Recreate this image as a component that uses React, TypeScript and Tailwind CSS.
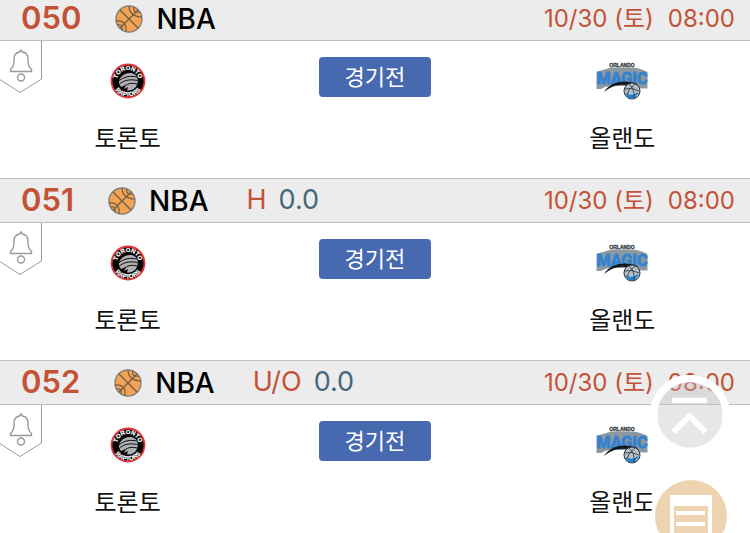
const latin = "font-['Inter','Noto_Sans_CJK_KR',sans-serif]";

type Match = { no: string; market?: string; line?: string };

const matches: Match[] = [
  { no: "050" },
  { no: "051", market: "H", line: "0.0" },
  { no: "052", market: "U/O", line: "0.0" },
];

function Basketball() {
  return (
    <svg className="size-7 shrink-0" viewBox="0 0 28 28" fill="none" aria-hidden="true">
      <circle cx="14" cy="14" r="13" fill="#f2a454" stroke="#85807a" strokeWidth="1.4" />
      <g stroke="#6b5b48" strokeWidth="1.2">
        <path d="M5 5 23 23M23 5 5 23" />
        <path d="M14 1c0 6 4 11 13 11M19 2c-1 4 1 6 6 5" />
        <path d="M1 16c7-1 11 3 10 11M2 20c4-1 6 1 5 5" />
      </g>
    </svg>
  );
}

function BellFlag() {
  return (
    <svg className="h-[53px] w-[42px]" viewBox="0 0 42 53" fill="none" stroke="#999" aria-hidden="true">
      <path d="M41.5 0V38L20 51.5L-1 38" />
      <g strokeWidth="1.4">
        <path d="M10.5 30.5H31.5V28.500C29 26.500 28 24 28 20V18C28 14 25.500 11.500 22.500 11L21 9L19.500 11C16.500 11.500 14 14 14 18V20C14 24 13 26.500 10.500 28.500Z" />
        <circle cx="21" cy="36.500" r="3.500" />
      </g>
    </svg>
  );
}

function RaptorsLogo() {
  return (
    <svg className="size-9" viewBox="0 0 36 36" role="img" aria-label="Toronto Raptors">
      <defs>
        <path id="raptors-top" d="M7 18a11 11 0 0 1 22 0" />
        <path id="raptors-bottom" d="M2.500 18a15.500 15.500 0 0 0 31 0" />
      </defs>
      <circle cx="18" cy="18" r="16.500" fill="#050505" stroke="#e8343c" strokeWidth="1.800" />
      <path d="M9 18C11 12 17 9 23 10.500 27 12 28.500 16 27.500 20 26.500 25 22 28 17 27.500L18 24 14 26 16 22 11 24 9 21Z" fill="#b0b0b2" />
      <g fill="none" stroke="#0c0c0c" strokeWidth="1">
        <path d="M8 18.500c6-5 12-6 19-4.500M8.500 22c5-5 11-6 19-4.500M13 24.500c4-4 8-5 14-3.500" />
      </g>
      <g className="font-['Liberation_Sans',sans-serif] font-bold" fill="#fff" stroke="#fff" strokeWidth=".2" fontSize="6" textAnchor="middle">
        <text><textPath href="#raptors-top" startOffset="50%">TORONTO</textPath></text>
        <text><textPath href="#raptors-bottom" startOffset="50%">RAPTORS</textPath></text>
      </g>
    </svg>
  );
}

function MagicLogo() {
  return (
    <svg className="h-[38px] w-[52px]" viewBox="0 0 52 38" role="img" aria-label="Orlando Magic">
      <path d="M.5 10Q13 6 15 5.500H37Q44 6 51.500 10V26.500H45L38 24H14L9 25 5 27H.5Z" fill="#8d999f" />
      <g textAnchor="middle">
        <text className="font-['Liberation_Sans',sans-serif]" x="26" y="5" fontSize="5" fontWeight="700" fill="#333c42" stroke="#333c42" strokeWidth=".3">ORLANDO</text>
        <text className="font-['Roboto',sans-serif]" x="26" y="22" fontSize="16" fontWeight="700" fill="#3482d0" stroke="#3482d0" strokeWidth=".9">MAGIC</text>
      </g>
      <path d="M8 30C16 18 31 18 42 22L38 26C27 20 17 23 8 30Z" fill="#111820" />
      <circle cx="36" cy="29" r="8" fill="#b4bfc7" stroke="#26323c" />
      <path d="M30 32q6 4 12-1M31 35q5 1 9-1" stroke="#2680cf" strokeWidth="2" fill="none" />
      <path d="M29 27q7-2 14 2M33 22q6 5 5 14M39 22q-7 5-8 11" stroke="#26323c" strokeWidth=".8" fill="none" />
    </svg>
  );
}

function Team({ name, logo }: { name: string; logo: React.ReactNode }) {
  return (
    <div className="flex flex-col items-center pt-5">
      <div className="flex h-10 items-center">{logo}</div>
      <p className="mt-[18px] text-2xl leading-9 text-[#111]">{name}</p>
    </div>
  );
}

function MatchRow({ match }: { match: Match }) {
  return (
    <article>
      <header className={`flex h-[45px] items-center border-y border-[#bdbdbd] bg-[#ececec] pr-[15px] pl-[21px] ${latin}`}>
        <span className="text-[31px] font-semibold text-[#c35237]">{match.no}</span>
        <div className="ml-[34px] flex items-center gap-[13px]">
          <Basketball />
          <h2 className="text-[28px] font-medium text-black">NBA</h2>
        </div>
        {match.market && (
          <p className="ml-[38px] flex gap-3 text-[27px] text-[#c35237]">
            {match.market}
            <span className="text-[#44677b]">{match.line}</span>
          </p>
        )}
        <time className="ml-auto flex gap-3.5 text-2xl text-[#c35237]">
          <span>10/30 (토)</span>
          <span>08:00</span>
        </time>
      </header>
      <div className="relative grid h-[137px] grid-cols-3 px-1">
        <button type="button" aria-label="알림" className="absolute top-0 left-0">
          <BellFlag />
        </button>
        <Team name="토론토" logo={<RaptorsLogo />} />
        <div className="flex justify-center pt-4">
          <button type="button" className="h-10 w-28 rounded-sm bg-[#4769af] pb-1 text-[22px] leading-9 text-white">경기전</button>
        </div>
        <Team name="올랜도" logo={<MagicLogo />} />
      </div>
    </article>
  );
}

export default function App() {
  return (
    <div className="relative h-screen overflow-hidden bg-white font-['Noto_Sans_CJK_KR',sans-serif]">
      <main className="-mt-1">
        {matches.map((m) => (
          <MatchRow key={m.no} match={m} />
        ))}
      </main>
      <div className="fixed right-5 -bottom-[23px] flex flex-col gap-[21px]">
        <button type="button" aria-label="맨 위로">
          <svg className="size-20" viewBox="0 0 80 80" fill="none" stroke="#fff" aria-hidden="true">
            <circle cx="40" cy="40" r="33" fill="#c1c1c1" fillOpacity=".38" stroke="none" />
            <circle cx="40" cy="40" r="36.500" strokeWidth="7.500" />
            <path d="M22 25.500H57M23.500 57 39.500 41 55.500 57" strokeWidth="5.500" />
          </svg>
        </button>
        <button type="button" aria-label="목록">
          <svg className="size-20" viewBox="0 0 80 80" aria-hidden="true">
            <circle cx="41" cy="40" r="38" fill="#eed3b0" stroke="#fff" strokeWidth="4" />
            <path d="M20 19H62V66H20Z" fill="#fff" />
            <path d="M24 30H58V62H24Z" fill="#eed3b0" />
            <path d="M26 35H55V39H26ZM26 46H55V50H26Z" fill="#fff" />
          </svg>
        </button>
      </div>
    </div>
  );
}
